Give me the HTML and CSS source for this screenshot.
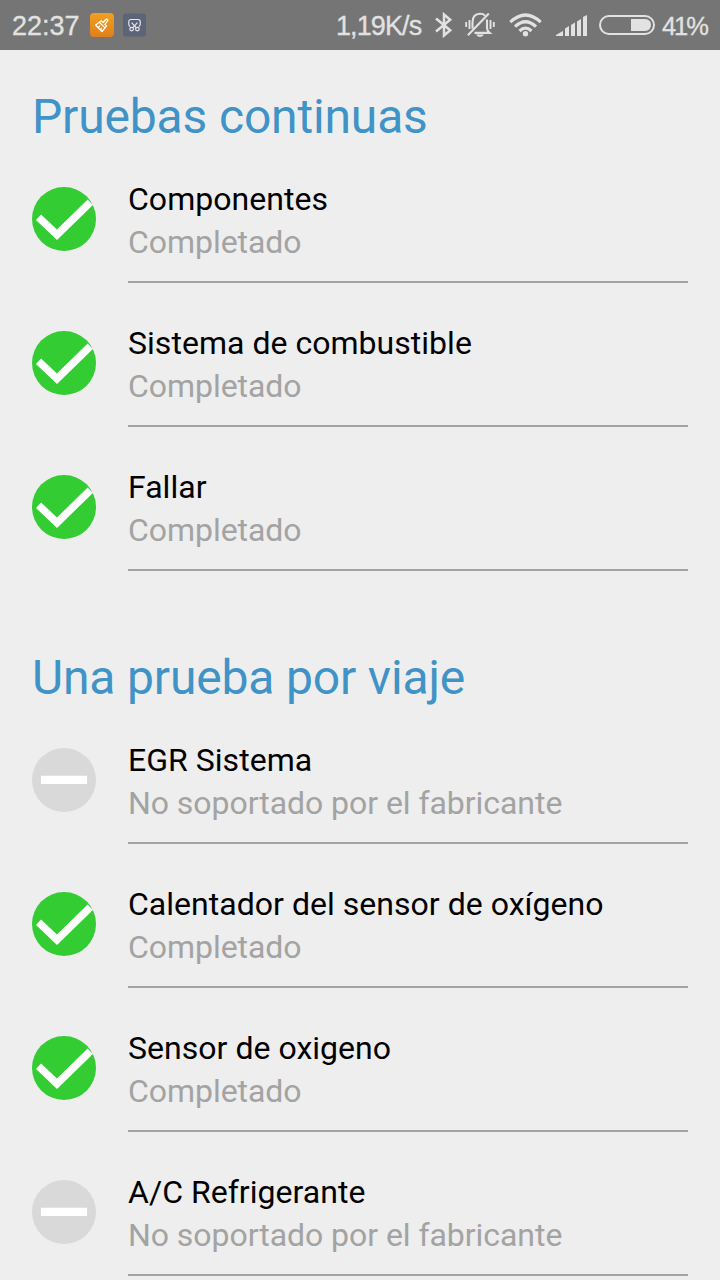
FILE: index.html
```html
<!DOCTYPE html>
<html lang="es">
<head>
<meta charset="utf-8">
<title>Pruebas</title>
<link rel="stylesheet" href="styles.css">
</head>
<body>
<svg class="defs" aria-hidden="true">
  <symbol id="ok" viewBox="0 0 64 64">
    <circle cx="32" cy="32" r="32" fill="#33cc33"/>
    <path d="M6.5 30.2L25 47.7L58.3 15.2" fill="none" stroke="#fff" stroke-width="7.5"/>
  </symbol>
  <symbol id="none" viewBox="0 0 64 64">
    <circle cx="32" cy="32" r="32" fill="#d9d9d9"/>
    <rect x="9" y="27.7" width="46" height="8.3" rx=".6" fill="#fff"/>
  </symbol>
</svg>
<header class="status">
  <span class="time">22:37</span>
  <svg class="app app-clean" viewBox="0 0 24 24" width="24" height="24">
    <defs><linearGradient id="g" x1="0" y1="0" x2="0" y2="1"><stop offset="0" stop-color="#f2a01f"/><stop offset="1" stop-color="#df7f1c"/></linearGradient></defs>
    <rect width="24" height="24" rx="4" fill="url(#g)"/>
    <path d="M5.5 12L9.3 9.2L15 14.9L12 18.5ZM9.3 9.2L11.3 7.8L13 9.5L16.3 6.2Q18.2 6 17.8 7.7L14.9 11.4L16.5 13L15 14.9M8.4 14.4L10 12.8M10.5 16.5L12 15" fill="none" stroke="#fff" stroke-width="1.25" stroke-linejoin="round"/>
  </svg>
  <svg class="app app-shot" viewBox="0 0 24 24" width="23" height="24">
    <rect width="24" height="24" rx="3" fill="#5d6478"/>
    <g fill="none" stroke="#e8e9ed" stroke-width="1.2"><path d="M7.5 13.5Q6 13 6 11V8.7Q6 6.3 8.4 6.3H15.6Q18 6.3 18 8.7V11Q18 13 16.5 13.5M9 9.5L13.6 14.7M15 9.5L10.4 14.7"/><circle cx="9" cy="16.3" r="1.9"/><circle cx="15" cy="16.3" r="1.9"/></g>
  </svg>
  <div class="system">
    <span class="speed">1,19K/s</span>
    <svg class="bt" width="18" height="26" viewBox="0 0 18 26"><path d="M1 6.5L15.2 18.2L9 23.5V2.5L15.2 7.8L1 19.5" fill="none" stroke="#e2e2e2" stroke-width="2.5"/></svg>
    <svg class="bell" width="30" height="26" viewBox="0 0 30 26">
      <path d="M7.5 16.5V10.5Q7.5 1.8 15 1.8Q18.5 1.8 20 3.6M22 7.5V16Q22 18.8 24.6 20.9H9.5M2.9 23.3L23.8 1.6" fill="none" stroke="#e2e2e2" stroke-width="2.1"/>
      <path d="M11 22.6H19Q18 25 15 25T11 22.6Z" fill="#e2e2e2"/>
      <path d="M1.2 10V15M4.5 8V17M25.5 8V17M28.8 10V15" stroke="#e2e2e2" stroke-width="1.9"/>
    </svg>
    <svg class="wifi" width="33" height="24" viewBox="0 0 33 24"><g fill="none" stroke="#e2e2e2" stroke-width="3.2"><path d="M1.3 9.2Q16.5 -5.2 31.7 9.2"/><path d="M6 13.7Q16.5 3.7 27 13.7"/><path d="M10.5 18Q16.5 12.2 22.5 18"/></g><circle cx="16.5" cy="20.7" r="2.7" fill="#e2e2e2"/></svg>
    <svg class="signal" width="31" height="21" viewBox="0 0 31 21" fill="#e2e2e2"><path d="M0 21V20L7 16V21ZM9 21V13.5L13 11V21ZM15 21V10L19 7.5V21ZM21 21V6.5L25 4V21ZM27 21V2L31 0V21Z"/></svg>
    <svg class="battery" width="56" height="20" viewBox="0 0 56 20"><rect x="1" y="1" width="54" height="18" rx="9" fill="none" stroke="#e2e2e2" stroke-width="2"/><path d="M32 4H46Q52 4.6 52 10T46 16H32Z" fill="#e2e2e2"/></svg>
    <span class="percent">41%</span>
  </div>
</header>
<main>
  <section>
    <h1>Pruebas continuas</h1>
    <ul>
      <li><svg class="state"><use href="#ok"/></svg><div class="item"><p class="name">Componentes</p><p class="result">Completado</p></div></li>
      <li><svg class="state"><use href="#ok"/></svg><div class="item"><p class="name">Sistema de combustible</p><p class="result">Completado</p></div></li>
      <li><svg class="state"><use href="#ok"/></svg><div class="item"><p class="name">Fallar</p><p class="result">Completado</p></div></li>
    </ul>
  </section>
  <section>
    <h1>Una prueba por viaje</h1>
    <ul>
      <li><svg class="state"><use href="#none"/></svg><div class="item"><p class="name">EGR Sistema</p><p class="result">No soportado por el fabricante</p></div></li>
      <li><svg class="state"><use href="#ok"/></svg><div class="item"><p class="name">Calentador del sensor de oxígeno</p><p class="result">Completado</p></div></li>
      <li><svg class="state"><use href="#ok"/></svg><div class="item"><p class="name">Sensor de oxigeno</p><p class="result">Completado</p></div></li>
      <li><svg class="state"><use href="#none"/></svg><div class="item"><p class="name">A/C Refrigerante</p><p class="result">No soportado por el fabricante</p></div></li>
    </ul>
  </section>
</main>
</body>
</html>
```
FILE: styles.css
```css
* { box-sizing: border-box; margin: 0; padding: 0; }
body {
  height: 1280px;
  overflow: hidden;
  background: #eeeeee;
  font-family: Roboto, "Liberation Sans", sans-serif;
}
.defs { display: none; }
svg { display: block; flex: none; }
.status {
  display: flex;
  align-items: center;
  height: 50px;
  padding: 0 12px;
  background: #757575;
  color: #e2e2e2;
  font: 27px/50px "Liberation Sans", Arial, sans-serif;
  -webkit-text-stroke: 0.3px #e2e2e2;
  white-space: nowrap;
}
.time { width: 78px; padding-top: 2px; }
.app-shot { margin-left: 9px; }
.system { display: flex; align-items: center; margin-left: auto; }
.speed { width: 99px; padding-top: 2px; letter-spacing: -0.9px; }
.bell { margin-left: 12px; }
.wifi { margin-left: 14px; }
.signal { margin-left: 14px; margin-top: 1px; }
.battery { margin-left: 12px; }
.percent { width: 46px; margin-left: 7px; padding-top: 2px; font-size: 25.5px; letter-spacing: -2.1px; }
section { padding: 39px 32px 0; }
section + section { padding-top: 79px; }
h1 {
  height: 50px;
  color: #4093c6;
  font-size: 48px;
  font-weight: 400;
  line-height: 56px;
  letter-spacing: -0.16px;
}
ul { list-style: none; }
li { display: flex; gap: 32px; height: 144px; }
.state { width: 64px; height: 64px; margin-top: 48px; }
.item { flex: 1; padding-top: 39px; border-bottom: 2px solid #a3a3a3; }
.item p { font-size: 32px; line-height: 43px; white-space: nowrap; }
.item .name { color: #000; letter-spacing: 0.03px; }
.item .result { color: #a3a3a3; letter-spacing: -0.05px; }
```
